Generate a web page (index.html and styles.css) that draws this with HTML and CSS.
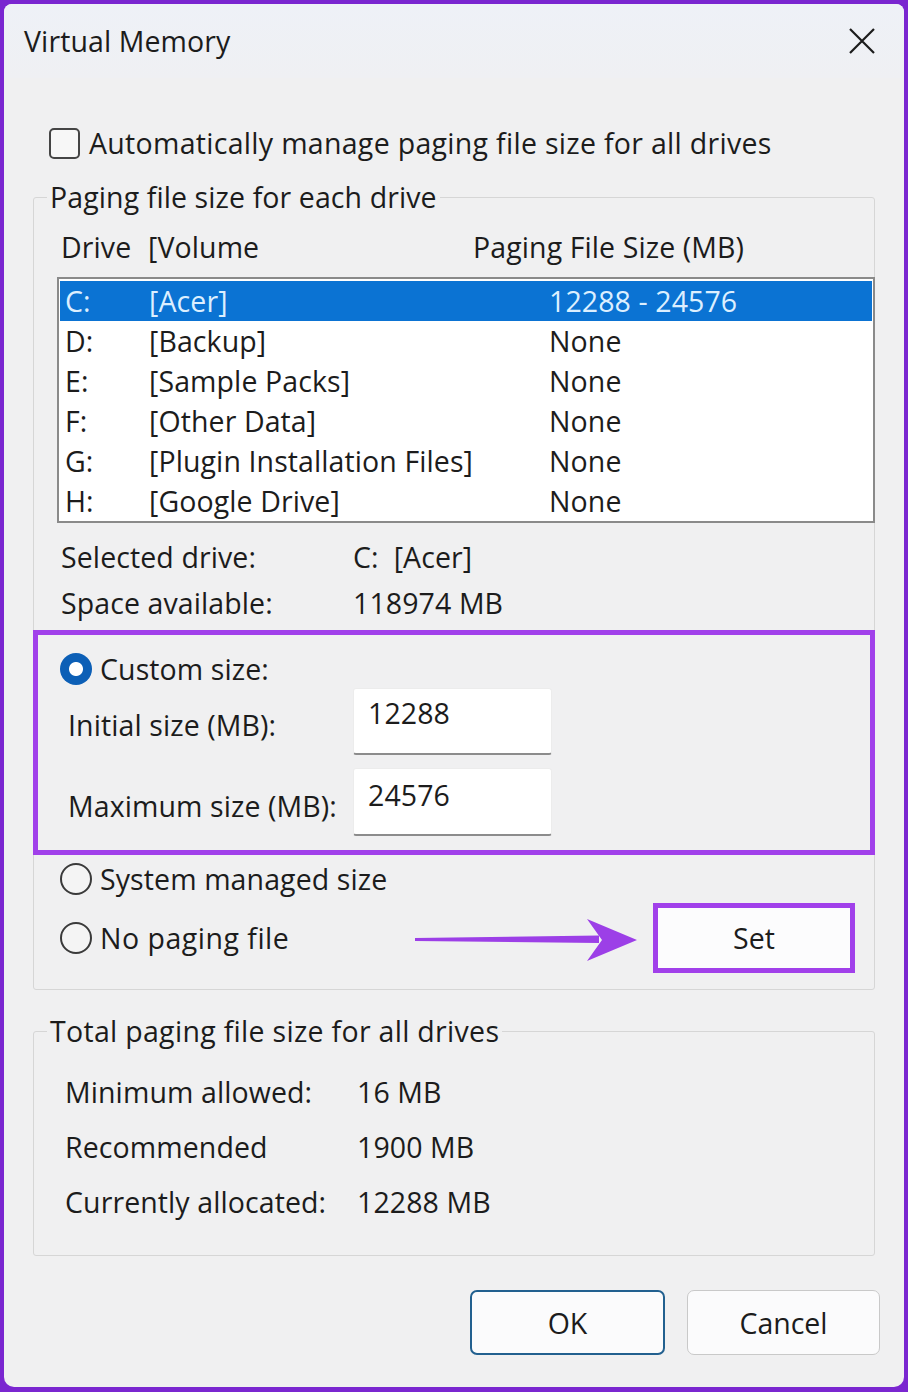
FILE: index.html
```html
<!DOCTYPE html>
<html lang="en">
<head>
<meta charset="utf-8">
<title>Virtual Memory</title>
<link rel="stylesheet" href="styles.css">
</head>
<body>
<div class="dialog">
  <div class="titlebar">
    <span class="title">Virtual Memory</span>
    <svg class="close" width="26" height="26" viewBox="0 0 26 26" aria-hidden="true">
      <path d="M1 1 L25 25 M25 1 L1 25" stroke="#1b1b1b" stroke-width="2.2" fill="none"/>
    </svg>
  </div>
  <div class="content">
    <div class="check-row">
      <span class="checkbox"></span>
      <span>Automatically manage paging file size for all drives</span>
    </div>

    <fieldset class="group group-drives">
      <legend>Paging file size for each drive</legend>
      <div class="list-header">
        <span class="col-drive">Drive</span>
        <span class="col-vol">[Volume</span>
        <span>Paging File Size (MB)</span>
      </div>
      <div class="listbox">
        <div class="list-row selected"><span class="c-drive">C:</span><span class="c-vol">[Acer]</span><span>12288 - 24576</span></div>
        <div class="list-row"><span class="c-drive">D:</span><span class="c-vol">[Backup]</span><span>None</span></div>
        <div class="list-row"><span class="c-drive">E:</span><span class="c-vol">[Sample Packs]</span><span>None</span></div>
        <div class="list-row"><span class="c-drive">F:</span><span class="c-vol">[Other Data]</span><span>None</span></div>
        <div class="list-row"><span class="c-drive">G:</span><span class="c-vol">[Plugin Installation Files]</span><span>None</span></div>
        <div class="list-row"><span class="c-drive">H:</span><span class="c-vol">[Google Drive]</span><span>None</span></div>
      </div>
      <div class="info">
        <div class="info-row"><span class="info-label">Selected drive:</span><span>C:&nbsp; [Acer]</span></div>
        <div class="info-row"><span class="info-label">Space available:</span><span>118974 MB</span></div>
      </div>

      <div class="highlight">
        <div class="radio-row custom"><span class="radio checked"></span><span>Custom size:</span></div>
        <div class="field-row initial"><span class="field-label">Initial size (MB):</span><div class="textbox">12288</div></div>
        <div class="field-row maximum"><span class="field-label">Maximum size (MB):</span><div class="textbox">24576</div></div>
      </div>

      <div class="radio-row system"><span class="radio"></span><span>System managed size</span></div>
      <div class="radio-row nopaging">
        <span class="radio"></span><span>No paging file</span>
        <svg class="arrow" width="222" height="50" viewBox="0 0 222 50" aria-hidden="true">
          <path d="M0 25 L184 22.5 L184 30 L0 28 Z" fill="#9c3fe7"/>
          <path d="M172 6 L222 27 L172 48 L187 27 Z" fill="#9c3fe7"/>
        </svg>
        <div class="set-box"><span>Set</span></div>
      </div>
    </fieldset>

    <fieldset class="group group-total">
      <legend>Total paging file size for all drives</legend>
      <div class="total-row"><span class="total-label">Minimum allowed:</span><span>16 MB</span></div>
      <div class="total-row"><span class="total-label">Recommended</span><span>1900 MB</span></div>
      <div class="total-row"><span class="total-label">Currently allocated:</span><span>12288 MB</span></div>
    </fieldset>

    <div class="buttons">
      <button class="btn btn-ok" type="button">OK</button>
      <button class="btn btn-cancel" type="button">Cancel</button>
    </div>
  </div>
</div>
</body>
</html>
```

FILE: styles.css
```css
* { box-sizing: border-box; }

html, body {
  margin: 0;
  padding: 0;
}

body {
  width: 908px;
  height: 1392px;
  background: #7a26d0;
  padding: 4px 4px 5px 4px;
  font-family: "Open Sans", "Noto Sans", sans-serif;
  font-size: 28.5px;
  letter-spacing: 0.1px;
  color: #1c1c1c;
}

.dialog {
  width: 900px;
  height: 1383px;
  background: #f0f0f1;
  border-radius: 8px 8px 10px 10px;
  overflow: hidden;
}

.titlebar {
  height: 74px;
  display: flex;
  align-items: center;
  justify-content: space-between;
  padding: 0 29px 0 20px;
  background: linear-gradient(#eef1f7, #eff0f3);
}

.title {
  line-height: 36px;
}

.close {
  display: block;
}

.content {
  padding: 0 29px 32px 29px;
}

.check-row {
  margin-top: 45px;
  height: 40px;
  display: flex;
  align-items: center;
  padding-left: 16px;
  gap: 9px;
  line-height: 36px;
  letter-spacing: 0.3px;
}

.checkbox {
  width: 31px;
  height: 31px;
  border: 2px solid #454545;
  border-radius: 5px;
  background: #f7f7f7;
  flex: none;
}

.group {
  margin: 0;
  padding: 0;
  border: 1px solid #d6d6d6;
  border-radius: 3px;
  min-inline-size: 0;
}

.group legend {
  margin-left: 13px;
  padding: 0 3px;
  line-height: 36px;
}

.group-drives {
  margin-top: 16px;
  padding-bottom: 16px;
}

.list-header {
  margin-top: 14px;
  height: 36px;
  line-height: 36px;
  display: flex;
  padding-left: 27px;
}

.col-drive { width: 87px; flex: none; }
.col-vol { width: 325px; flex: none; }

.listbox {
  margin: 12px -1px 0 23px;
  height: 246px;
  border: 2px solid #8a8a8a;
  padding: 2px 1px 0 1px;
  background: #ffffff;
}

.list-row {
  height: 40px;
  line-height: 40px;
  display: flex;
  padding-left: 5px;
  white-space: nowrap;
}

.list-row.selected {
  background: #0b73d3;
  color: #dcefff;
}

.c-drive { width: 84px; flex: none; }
.c-vol { width: 400px; flex: none; }

.info {
  margin-top: 11px;
}

.info-row {
  height: 46px;
  display: flex;
  align-items: center;
  padding-left: 27px;
  line-height: 36px;
}

.info-label {
  width: 292px;
  flex: none;
}

.highlight {
  margin: 4px -1px 0 -1px;
  border: 5px solid #a140ea;
  padding: 14px 0 14px 0;
}

.radio-row {
  display: flex;
  align-items: center;
  gap: 8px;
  line-height: 36px;
}

.radio {
  width: 32px;
  height: 32px;
  border-radius: 50%;
  border: 2px solid #3a3a3a;
  background: #f4f4f4;
  flex: none;
}

.radio.checked {
  border: none;
  background: radial-gradient(circle, #ffffff 0 6.5px, #0c5fb6 7.5px);
}

.radio-row.custom {
  height: 39px;
  padding-left: 22px;
}

.field-row {
  display: flex;
  align-items: center;
  padding-left: 30px;
  line-height: 36px;
}

.field-row.initial { height: 67px; }
.field-row.maximum { height: 68px; margin-top: 13px; }

.field-label {
  width: 285px;
  flex: none;
  padding-top: 7px;
}

.textbox {
  width: 199px;
  height: 100%;
  background: #ffffff;
  border: 1px solid #ececec;
  border-bottom: 2px solid #8c8c8c;
  border-radius: 3px;
  padding: 6px 0 0 14px;
  align-self: stretch;
}

.field-row.maximum .textbox {
  padding-top: 8px;
}

.radio-row.system {
  margin-top: 4px;
  height: 40px;
  padding-left: 26px;
}

.radio-row.nopaging {
  margin-top: 4px;
  height: 70px;
  padding-left: 26px;
  padding-right: 19px;
  letter-spacing: 0.5px;
}

.arrow {
  margin-left: auto;
  display: block;
  flex: none;
}

.set-box {
  margin-left: 8px;
  width: 202px;
  height: 70px;
  border: 5px solid #a140ea;
  background: #fcfcfd;
  display: flex;
  align-items: center;
  justify-content: center;
  flex: none;
  letter-spacing: 0.1px;
}

.group-total {
  margin-top: 23px;
  padding-bottom: 26px;
}

.group-total legend {
  letter-spacing: 0.3px;
}

.total-row {
  height: 55px;
  display: flex;
  align-items: center;
  padding-left: 31px;
  line-height: 36px;
}

.group-total legend + .total-row {
  margin-top: 15px;
}

.total-label {
  width: 292px;
  flex: none;
}

.buttons {
  margin-top: 34px;
  margin-right: -5px;
  display: flex;
  justify-content: flex-end;
  gap: 22px;
}

.btn {
  height: 65px;
  font-family: inherit;
  font-size: 28.5px;
  color: #1c1c1c;
  background: #fbfbfc;
  border-radius: 7px;
  padding: 0;
}

.btn-ok {
  width: 195px;
  border: 2px solid #22608f;
}

.btn-cancel {
  width: 193px;
  border: 1.5px solid #c9c9c9;
}
```
